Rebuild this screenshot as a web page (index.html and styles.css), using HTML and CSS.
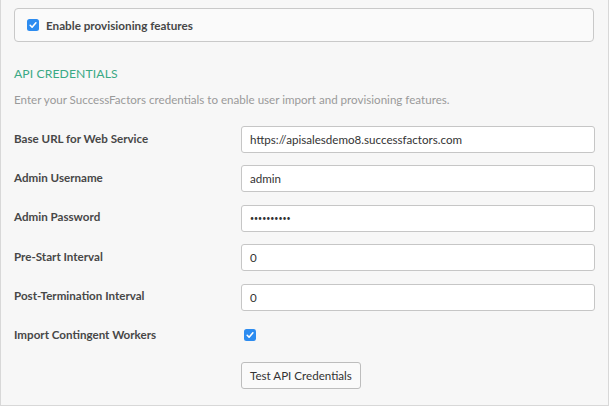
FILE: index.html
```html
<!DOCTYPE html>
<html>
<head>
<meta charset="utf-8">
<link rel="stylesheet" href="styles.css">
</head>
<body>
<div class="panel">
  <div class="toggle-box">
    <span class="check"><svg viewBox="0 0 12 12" width="12" height="12"><rect x="0" y="0" width="12" height="12" rx="2.5" fill="#2d8cf0"/><path d="M3.2 6.3 L5.1 8.2 L8.9 3.8" fill="none" stroke="#fff" stroke-width="1.6" stroke-linecap="round" stroke-linejoin="round"/></svg></span>
    <span class="toggle-label">Enable provisioning features</span>
  </div>
  <h2 class="section-title">API CREDENTIALS</h2>
  <p class="desc">Enter your SuccessFactors credentials to enable user import and provisioning features.</p>
  <div class="form">
    <div class="label">Base URL for Web Service</div>
    <div class="input">https://apisalesdemo8.successfactors.com</div>
    <div class="label">Admin Username</div>
    <div class="input">admin</div>
    <div class="label">Admin Password</div>
    <div class="input pw">••••••••••</div>
    <div class="label">Pre-Start Interval</div>
    <div class="input">0</div>
    <div class="label">Post-Termination Interval</div>
    <div class="input">0</div>
    <div class="label">Import Contingent Workers</div>
    <div class="cb-cell"><span class="check"><svg viewBox="0 0 12 12" width="12" height="12"><rect x="0" y="0" width="12" height="12" rx="2.5" fill="#2d8cf0"/><path d="M3.2 6.3 L5.1 8.2 L8.9 3.8" fill="none" stroke="#fff" stroke-width="1.6" stroke-linecap="round" stroke-linejoin="round"/></svg></span></div>
    <div class="label"></div>
    <div class="btn-cell"><span class="btn">Test API Credentials</span></div>
  </div>
</div>
</body>
</html>
```
FILE: styles.css
```css
html, body {
  margin: 0;
  padding: 0;
  background: #fff;
}
body {
  font-family: "Lato", "Open Sans", sans-serif;
  color: #444;
}
.panel {
  box-sizing: border-box;
  width: 609px;
  height: 406px;
  background: #f7f7f7;
  border-left: 1px solid #d8d8d8;
  border-right: 1px solid #d8d8d8;
  border-bottom: 1px solid #d8d8d8;
  padding: 8px 0 0 13px;
}
.toggle-box {
  width: 580px;
  height: 34px;
  box-sizing: border-box;
  border: 1px solid #c9c9c9;
  border-radius: 4px;
  background: #fafafa;
  display: flex;
  align-items: center;
  padding-left: 12px;
}
.check {
  display: inline-flex;
  width: 12px;
  height: 12px;
}
.toggle-label {
  margin-left: 7px;
  font-weight: bold;
  font-size: 11.7px;
  color: #474747;
}
.section-title {
  margin: 24px 0 0 0;
  font-size: 12.2px;
  font-weight: normal;
  color: #3aa985;
  line-height: 16px;
  letter-spacing: 0.1px;
}
.desc {
  margin: 10px 0 0 0;
  font-size: 11.6px;
  color: #9a9a9a;
  line-height: 16px;
}
.form {
  margin-top: 18px;
  display: grid;
  grid-template-columns: 227px 354px;
  grid-auto-rows: 27px;
  row-gap: 12.4px;
  align-items: center;
}
.label {
  font-weight: bold;
  font-size: 11.6px;
  color: #474747;
  margin-top: -3px;
}
.input {
  height: 27px;
  box-sizing: border-box;
  border: 1px solid #c6c6c6;
  border-radius: 3px;
  background: #fff;
  font-size: 11.6px;
  color: #333;
  display: flex;
  align-items: center;
  padding-left: 8px;
}
.input.pw {
  font-size: 7px;
  letter-spacing: 0;
}
.cb-cell {
  padding-left: 3px;
  display: flex;
  align-items: center;
  margin-top: -3px;
}
.btn-cell {
  display: flex;
}
.btn {
  display: inline-flex;
  align-items: center;
  height: 27px;
  box-sizing: border-box;
  padding: 0 8px;
  border: 1px solid #bdbdbd;
  border-radius: 3px;
  background: #fafafa;
  font-size: 11.6px;
  color: #333;
}
```
